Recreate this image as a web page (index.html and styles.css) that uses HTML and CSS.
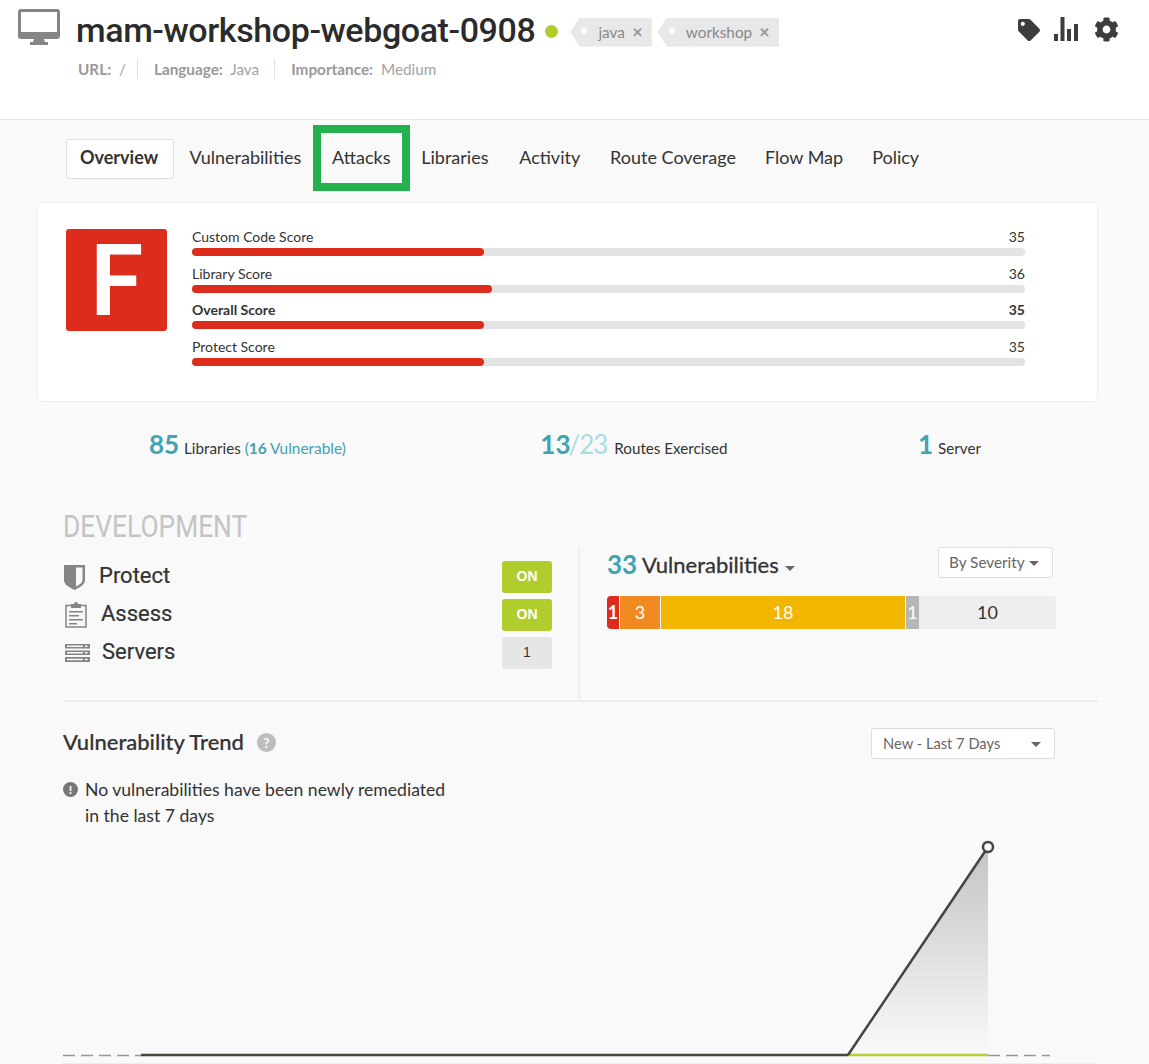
FILE: index.html
```html
<!DOCTYPE html>
<html>
<head>
    <title>mam-workshop-webgoat-0908</title>
    <link rel="stylesheet" href="styles.css">
</head>
<body>
    <!-- Application header -->
    <header class="app-header">
        <svg class="monitor" viewBox="0 0 42 36">
            <path fill="#858585" d="M3 0h36a3 3 0 0 1 3 3v24a3 3 0 0 1-3 3H26l1 3h3v3H12v-3h3l1-3H3a3 3 0 0 1-3-3V3a3 3 0 0 1 3-3z"/>
            <rect x="3" y="3" width="36" height="20" fill="#fff"/>
        </svg>
        <div class="app-info">
            <div class="title-row">
                <h1>mam-workshop-webgoat-0908</h1>
                <span class="status-dot"></span>
                <span class="tag">java <b>&#10005;</b></span>
                <span class="tag">workshop <b>&#10005;</b></span>
            </div>
            <div class="meta">
                <span class="meta-item"><b>URL:</b> /</span>
                <span class="meta-item"><b>Language:</b> Java</span>
                <span class="meta-item"><b>Importance:</b> Medium</span>
            </div>
        </div>
        <div class="header-icons">
            <svg class="icon-tag" viewBox="0 0 512 512"><path d="M0 252.118V48C0 21.49 21.49 0 48 0h204.118a48 48 0 0 1 33.941 14.059l211.882 211.882c18.745 18.745 18.745 49.137 0 67.882L293.823 497.941c-18.745 18.745-49.137 18.745-67.882 0L14.059 286.059A48 48 0 0 1 0 252.118zM112 64c-26.51 0-48 21.49-48 48s21.49 48 48 48 48-21.49 48-48-21.49-48-48-48z"/></svg>
            <svg class="icon-bars" viewBox="0 0 24 24"><rect x="0" y="17" width="4" height="7"/><rect x="6.5" y="0" width="4" height="24"/><rect x="13" y="12" width="4" height="12"/><rect x="20" y="7" width="4" height="17"/></svg>
            <svg class="icon-gear" viewBox="0 0 512 512"><path d="M487.4 315.7l-42.6-24.6c4.3-23.2 4.3-47 0-70.2l42.6-24.6c4.9-2.8 7.1-8.6 5.5-14-11.1-35.6-30-67.8-54.7-94.6-3.8-4.1-10-5.1-14.8-2.3L380.8 110c-17.9-15.4-38.5-27.3-60.8-35.1V25.8c0-5.6-3.9-10.5-9.4-11.7-36.7-8.2-74.3-7.8-109.2 0-5.5 1.2-9.4 6.1-9.4 11.7V75c-22.2 7.9-42.8 19.8-60.8 35.1L88.7 85.5c-4.9-2.8-11-1.9-14.8 2.3-24.7 26.7-43.6 58.9-54.7 94.6-1.7 5.4.6 11.2 5.5 14L67.3 221c-4.3 23.2-4.3 47 0 70.2l-42.6 24.6c-4.9 2.8-7.1 8.6-5.5 14 11.1 35.6 30 67.8 54.7 94.6 3.8 4.1 10 5.1 14.8 2.3l42.6-24.6c17.9 15.4 38.5 27.3 60.8 35.1v49.2c0 5.6 3.9 10.5 9.4 11.7 36.7 8.2 74.3 7.8 109.2 0 5.5-1.2 9.4-6.1 9.4-11.7v-49.2c22.2-7.9 42.8-19.8 60.8-35.1l42.6 24.6c4.9 2.8 11 1.9 14.8-2.3 24.7-26.7 43.6-58.9 54.7-94.6 1.5-5.5-.7-11.3-5.6-14.1zM256 336c-44.1 0-80-35.9-80-80s35.9-80 80-80 80 35.9 80 80-35.9 80-80 80z"/></svg>
        </div>
    </header>

    <!-- Tabs -->
    <nav class="tabs">
        <a class="tab active">Overview</a>
        <a class="tab">Vulnerabilities</a>
        <a class="tab highlighted">Attacks</a>
        <a class="tab">Libraries</a>
        <a class="tab">Activity</a>
        <a class="tab">Route Coverage</a>
        <a class="tab">Flow Map</a>
        <a class="tab">Policy</a>
    </nav>

    <!-- Score card -->
    <section class="score-card">
        <div class="grade">F</div>
        <div class="scores">
            <div class="score">
                <div class="score-label"><span>Custom Code Score</span><span>35</span></div>
                <div class="track"><div class="fill" style="width: 35%"></div></div>
            </div>
            <div class="score">
                <div class="score-label"><span>Library Score</span><span>36</span></div>
                <div class="track"><div class="fill" style="width: 36%"></div></div>
            </div>
            <div class="score overall">
                <div class="score-label"><span>Overall Score</span><span>35</span></div>
                <div class="track"><div class="fill" style="width: 35%"></div></div>
            </div>
            <div class="score">
                <div class="score-label"><span>Protect Score</span><span>35</span></div>
                <div class="track"><div class="fill" style="width: 35%"></div></div>
            </div>
        </div>
    </section>

    <!-- Stats -->
    <section class="stats">
        <div class="stat"><span class="num">85</span> Libraries <span class="teal">(<b>16</b> Vulnerable)</span></div>
        <div class="stat routes-stat"><span class="num routes">13</span><span class="num faded">/23</span> Routes Exercised</div>
        <div class="stat"><span class="num">1</span> Server</div>
    </section>

    <!-- Environment -->
    <section class="environment">
        <h2 class="env-title">DEVELOPMENT</h2>
        <div class="env-panels">
            <div class="env-left">
                <div class="env-row">
                    <svg class="row-icon protect-icon" viewBox="0 0 21 25"><path fill="#858585" d="M0 0h21v15c0 4-4 7-10.500 10C4 22 0 19 0 15z"/><path fill="#f9f9f9" d="M12 2.500h6.500V15c0 2.500-2.500 4.500-6.500 6.500z"/></svg>
                    <span class="row-name">Protect</span>
                    <span class="pill on">ON</span>
                </div>
                <div class="env-row">
                    <svg class="row-icon assess-icon" viewBox="0 0 22 26"><path fill="none" stroke="#858585" stroke-width="1.500" d="M6 3.500H1v21.500h20V3.500h-5"/><path fill="#858585" d="M6 2h3a2 2 0 0 1 4 0h3v4H6zM4 9h14v1.500H4zM4 13h10v1.500H4zM4 17h14v1.500H4zM4 21h8v1.500H4z"/></svg>
                    <span class="row-name">Assess</span>
                    <span class="pill on">ON</span>
                </div>
                <div class="env-row">
                    <svg class="row-icon servers-icon" viewBox="0 0 25 18"><path fill="#858585" d="M0 0h25v4.500H0zM0 6.500h25V11H0zM0 13h25v5H0z"/><path fill="#f9f9f9" d="M2 1.500h16v1.500H2zM20 1.500h2.500v1.500H20zM2 8h16v1.500H2zM20 8h2.500v1.500H20zM2 14.800h16v1.500H2zM20 14.800h2.500v1.500H20z"/></svg>
                    <span class="row-name">Servers</span>
                    <span class="pill count">1</span>
                </div>
            </div>
            <div class="env-right">
                <div class="vuln-head">
                    <div class="vuln-title"><span class="vuln-num">33</span> Vulnerabilities <i class="caret"></i></div>
                    <div class="select severity">By Severity <i class="caret small"></i></div>
                </div>
                <div class="vuln-bar">
                    <span class="seg critical">1</span>
                    <span class="seg high">3</span>
                    <span class="seg medium">18</span>
                    <span class="seg low">1</span>
                    <span class="seg note">10</span>
                </div>
            </div>
        </div>
    </section>

    <!-- Trend -->
    <section class="trend">
        <div class="trend-head">
            <h3>Vulnerability Trend</h3>
            <span class="help">?</span>
            <div class="select period">New - Last 7 Days <i class="caret small"></i></div>
        </div>
        <div class="notice">
            <span class="notice-icon">!</span>
            <p>No vulnerabilities have been newly remediated<br>in the last 7 days</p>
        </div>
        <svg class="chart" viewBox="0 0 1035 228">
            <defs>
                <linearGradient id="areaFill" x1="0" y1="0" x2="0" y2="1">
                    <stop offset="0" stop-color="#c4c4c4"/>
                    <stop offset="1" stop-color="#f9f9f9"/>
                </linearGradient>
            </defs>
            <path d="M785 220L925 12V220z" fill="url(#areaFill)"/>
            <path d="M0 220.500H78M925 220.500H987" fill="none" stroke="#999" stroke-width="1.500" stroke-dasharray="12 6"/>
            <path d="M78 220H785" fill="none" stroke="#44483a" stroke-width="2.500"/>
            <path d="M785 220H925" fill="none" stroke="#b5cf3a" stroke-width="2.500"/>
            <path d="M785 220L925 12" fill="none" stroke="#444" stroke-width="2.500"/>
            <circle cx="925" cy="12" r="5" fill="#f9f9f9" stroke="#444" stroke-width="2.500"/>
        </svg>
    </section>
</body>
</html>
```
FILE: styles.css
```css
html, body {
    height: 1064px;
    overflow: hidden;
}

body {
    margin: 0;
    background-color: #f9f9f9;
    font-family: Lato, sans-serif;
    color: #333;
}

/* Header */
.app-header {
    display: flex;
    height: 120px;
    box-sizing: border-box;
    padding: 9px 30px 0 18px;
    background-color: #fff;
    border-bottom: 1px solid #e6e6e6;
}

.monitor {
    width: 42px;
    height: 36px;
    margin-right: 16px;
}

.app-info {
    flex: 1;
}

.title-row {
    display: flex;
    align-items: center;
    height: 44px;
}

h1 {
    margin: -2px 0 0;
    font-family: Roboto, sans-serif;
    font-size: 34px;
    font-weight: 500;
    color: #2b2b2b;
    letter-spacing: -0.4px;
}

.status-dot {
    width: 13px;
    height: 13px;
    margin: 0 12px 0 10px;
    border-radius: 50%;
    background-color: #b0cd2e;
}

.tag {
    position: relative;
    display: flex;
    align-items: center;
    height: 29px;
    margin: 2px 6px 0 0;
    padding: 0 9px 0 28px;
    background-color: #e8e8e8;
    clip-path: polygon(9px 0, 100% 0, 100% 100%, 9px 100%, 0 50%);
    font-size: 15.300px;
    color: #888;
}

.tag::before {
    content: "";
    position: absolute;
    left: 11px;
    top: 10px;
    width: 6px;
    height: 6px;
    border-radius: 50%;
    background-color: #fff;
}

.tag b {
    margin-left: 7px;
    font-size: 13px;
    color: #999;
}

.meta {
    display: flex;
    margin: 6px 0 0 2px;
    font-size: 15.300px;
    color: #a3a3a3;
}

.meta-item {
    padding-right: 15px;
    margin-right: 16px;
    border-right: 1px solid #d9dfe6;
    line-height: 20px;
}

.meta-item:first-child {
    padding-right: 11px;
}

.meta-item:last-child {
    border-right: none;
}

.meta-item b {
    margin-right: 4px;
    color: #999;
}

.header-icons {
    display: flex;
    align-items: flex-start;
    gap: 14px;
    padding-top: 8px;
}

.header-icons svg {
    fill: #3d3d3d;
}

.icon-tag {
    width: 22px;
    height: 22px;
    margin-top: 2px;
}

.icon-bars {
    width: 24px;
    height: 24px;
}

.icon-gear {
    width: 25px;
    height: 25px;
    margin-left: 2px;
}

/* Tabs */
.tabs {
    display: flex;
    align-items: center;
    height: 40px;
    margin: 19px 0 0 66px;
    font-size: 18px;
}

.tab {
    position: relative;
    padding: 0 15.400px 4px;
    line-height: 34px;
    color: #333;
}

.tab:nth-child(n+6) {
    padding: 0 14.500px 4px;
}

.tab.active {
    padding: 0 15px 4px 13px;
    background-color: #fff;
    border: 1px solid #ddd;
    border-radius: 3px;
    font-weight: 700;
}

.tab.highlighted::after {
    content: "";
    position: absolute;
    left: -4px;
    right: -4px;
    top: -15px;
    bottom: -13px;
    border: 8px solid #22b14c;
}

/* Score card */
.score-card {
    display: flex;
    box-sizing: border-box;
    width: 1061px;
    height: 200px;
    margin: 23px 0 0 37px;
    padding: 26px 72px 0 28px;
    background-color: #fff;
    border: 1px solid #eee;
    border-radius: 4px;
}

.grade {
    width: 101px;
    height: 102px;
    margin-right: 25px;
    background-color: #de2c1c;
    border-radius: 3px;
    font-family: Lato, sans-serif;
    font-size: 97px;
    font-weight: 700;
    line-height: 98px;
    text-align: center;
    color: #fff;
}

.scores {
    flex: 1;
}

.score {
    height: 36.700px;
}

.score-label {
    display: flex;
    justify-content: space-between;
    height: 19px;
    font-size: 14px;
    line-height: 15px;
}

.overall .score-label {
    font-weight: 700;
}

.track {
    height: 8px;
    background-color: #e3e3e3;
    border-radius: 4px;
}

.fill {
    height: 100%;
    background-color: #de2c1c;
    border-radius: 4px;
}

/* Stats row */
.stats {
    display: flex;
    justify-content: space-between;
    align-items: baseline;
    height: 40px;
    margin: 26px 168px 0 149px;
    font-size: 15.200px;
}

.routes-stat {
    margin-left: 4px;
}

.num {
    font-size: 26px;
    font-weight: 700;
    color: #3fa3b2;
}

.stat .num:first-child {
    margin-right: 1px;
}

.stat .num.routes {
    margin-right: -2px;
}

.num.faded {
    margin-right: 3px;
    font-weight: 400;
    letter-spacing: -1px;
    color: #a9dce3;
}

.teal {
    font-size: 15.400px;
    color: #3fa3b2;
}

/* Environment */
.environment {
    margin: 0 51px 0 63px;
    padding-bottom: 1px;
    border-bottom: 2px solid #eee;
}

.env-title {
    margin: 44px 0 0;
    height: 30px;
    font-family: Roboto, sans-serif;
    font-size: 31px;
    font-weight: 400;
    line-height: 30px;
    color: #c4c4c4;
    white-space: nowrap;
    transform: scaleX(0.85);
    transform-origin: left center;
}

.env-panels {
    display: flex;
    margin-top: 5px;
    height: 152px;
}

.env-left {
    width: 517px;
    box-sizing: border-box;
    padding: 14px 26px 0 1px;
    border-right: 2px solid #eee;
}

.env-row {
    display: flex;
    align-items: center;
    height: 32px;
    margin-bottom: 6px;
}

.row-icon {
    flex-shrink: 0;
}

.protect-icon {
    width: 21px;
    height: 25px;
    margin-right: 14px;
}

.assess-icon {
    width: 22px;
    height: 26px;
    margin: 0 14px 0 1px;
}

.servers-icon {
    width: 25px;
    height: 18px;
    margin: 0 12px 0 1px;
}

.row-name {
    flex: 1;
    margin-top: -4px;
    font-family: Roboto, sans-serif;
    font-size: 22px;
    color: #333;
    -webkit-text-stroke: 0.2px #333;
}

.pill {
    width: 50px;
    height: 32px;
    border-radius: 3px;
    font-family: "Liberation Sans", sans-serif;
    font-size: 14px;
    line-height: 31px;
    text-align: center;
}

.pill.on {
    background-color: #b0cd2e;
    color: #fff;
    font-weight: 700;
}

.pill.count {
    background-color: #e6e6e6;
    color: #333;
}

.env-right {
    width: 449px;
    padding-left: 27px;
}

.vuln-head {
    display: flex;
    justify-content: space-between;
    height: 49px;
}

.vuln-title {
    padding-top: 1px;
    font-size: 22px;
    line-height: 32px;
    color: #333;
    -webkit-text-stroke: 0.3px #333;
}

.vuln-num {
    font-size: 26px;
    font-weight: 700;
    vertical-align: -1px;
    color: #3fa3b2;
    -webkit-text-stroke: 0;
}

.caret {
    display: inline-block;
    margin-left: 1px;
    vertical-align: 2px;
    border-top: 5px solid #666;
    border-left: 5px solid transparent;
    border-right: 5px solid transparent;
}

.select {
    box-sizing: border-box;
    height: 31px;
    background-color: #fff;
    border: 1px solid #ddd;
    border-radius: 3px;
    font-size: 15.300px;
    line-height: 28px;
    color: #666;
}

.severity {
    width: 115px;
    margin-right: 3px;
    padding-left: 10px;
}

.period {
    position: relative;
    width: 184px;
    margin-left: auto;
    padding-left: 11px;
    font-size: 14.700px;
}

.period .caret {
    position: absolute;
    right: 13px;
    top: 13px;
}

.vuln-bar {
    display: flex;
    gap: 1px;
    height: 33px;
    font-size: 18px;
    line-height: 32px;
    text-align: center;
    color: #fff;
}

.seg {
    overflow: hidden;
}

.critical {
    width: 12px;
    background-color: #de2c1c;
    border-radius: 4px 0 0 4px;
    font-weight: 700;
}

.high {
    width: 40px;
    background-color: #f18a21;
}

.medium {
    width: 244px;
    background-color: #f2b600;
}

.low {
    width: 13px;
    margin-right: -1px;
    background-color: #b6b6b6;
}

.note {
    width: 137px;
    background-color: #eee;
    border-radius: 0 4px 4px 0;
    color: #333;
}

/* Trend */
.trend {
    margin: 0 51px 0 63px;
    border-bottom: 2px solid #eee;
}

.trend-head {
    display: flex;
    align-items: center;
    height: 31px;
    margin: 26px 43px 0 0;
}

h3 {
    margin: -5px 0 0;
    font-size: 22px;
    font-weight: 500;
    color: #333;
    -webkit-text-stroke: 0.2px #333;
}

.help {
    width: 19px;
    height: 19px;
    margin: -2px 0 0 13px;
    background-color: #bdbdbd;
    border-radius: 50%;
    font-size: 14px;
    font-weight: 900;
    line-height: 19px;
    text-align: center;
    color: #f4f4f4;
}

.notice {
    display: flex;
    margin-top: 18px;
    font-size: 17.600px;
    line-height: 26px;
}

.notice p {
    margin: 0;
    color: #333;
}

.notice-icon {
    width: 15px;
    height: 15px;
    margin: 5px 7px 0 0;
    background-color: #777;
    border-radius: 50%;
    font-size: 12px;
    font-weight: 900;
    line-height: 15px;
    text-align: center;
    color: #fff;
}

.chart {
    display: block;
    width: 1035px;
    height: 228px;
    margin-top: 6px;
}
```
